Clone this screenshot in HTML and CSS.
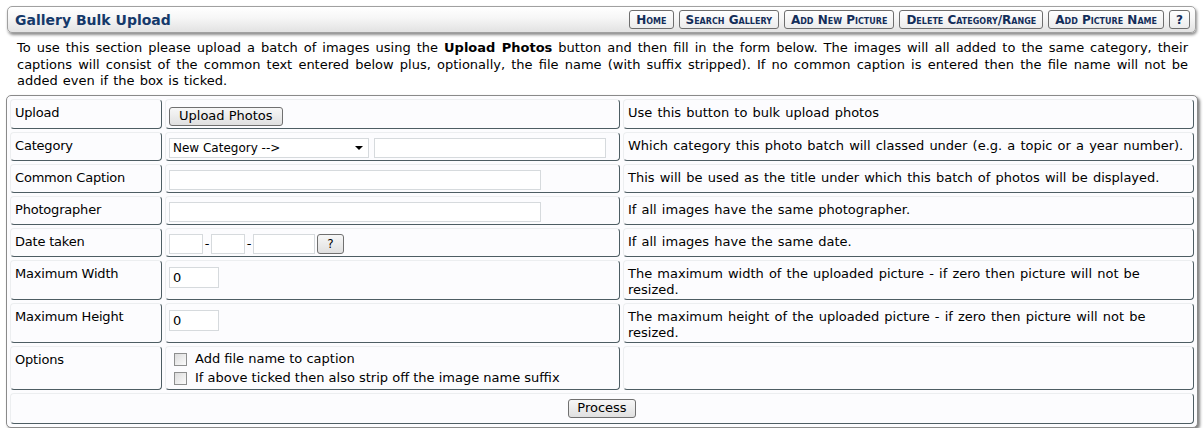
FILE: index.html
```html
<!DOCTYPE html>
<html>
<head>
<meta charset="utf-8">
<title>Gallery Bulk Upload</title>
<link rel="stylesheet" href="styles.css">
</head>
<body>
<div class="header">
  <h1 class="title">Gallery Bulk Upload</h1>
  <nav class="nav">
    <button class="navbtn">Home</button>
    <button class="navbtn">Search Gallery</button>
    <button class="navbtn">Add New Picture</button>
    <button class="navbtn">Delete Category/Range</button>
    <button class="navbtn">Add Picture Name</button>
    <button class="navbtn">?</button>
  </nav>
</div>
<p class="intro">To use this section please upload a batch of images using the <b>Upload Photos</b> button and then fill in the form below. The images will all added to the same category, their captions will consist of the common text entered below plus, optionally, the file name (with suffix stripped). If no common caption is entered then the file name will not be added even if the box is ticked.</p>
<div class="panel">
  <table class="form">
    <colgroup><col class="c1"><col class="c2"><col class="c3"></colgroup>
    <tr>
      <td class="lbl">Upload</td>
      <td class="inp"><button class="btn upbtn">Upload Photos</button></td>
      <td class="desc">Use this button to bulk upload photos</td>
    </tr>
    <tr>
      <td class="lbl">Category</td>
      <td class="inp"><span class="selwrap"><select class="sel"><option>New Category --&gt;</option></select></span><input class="txt catnew" type="text"></td>
      <td class="desc">Which category this photo batch will classed under (e.g. a topic or a year number).</td>
    </tr>
    <tr>
      <td class="lbl">Common Caption</td>
      <td class="inp"><input class="txt wide" type="text"></td>
      <td class="desc">This will be used as the title under which this batch of photos will be displayed.</td>
    </tr>
    <tr>
      <td class="lbl">Photographer</td>
      <td class="inp"><input class="txt wide" type="text"></td>
      <td class="desc">If all images have the same photographer.</td>
    </tr>
    <tr>
      <td class="lbl">Date taken</td>
      <td class="inp"><span class="daterow"><input class="txt dd" type="text"><span class="dash">-</span><input class="txt dd" type="text"><span class="dash">-</span><input class="txt yy" type="text"><button class="btn qbtn">?</button></span></td>
      <td class="desc">If all images have the same date.</td>
    </tr>
    <tr>
      <td class="lbl">Maximum Width</td>
      <td class="inp"><input class="txt num" type="text" value="0"></td>
      <td class="desc">The maximum width of the uploaded picture - if zero then picture will not be resized.</td>
    </tr>
    <tr>
      <td class="lbl">Maximum Height</td>
      <td class="inp"><input class="txt num" type="text" value="0"></td>
      <td class="desc">The maximum height of the uploaded picture - if zero then picture will not be resized.</td>
    </tr>
    <tr>
      <td class="lbl">Options</td>
      <td class="inp opts">
        <label class="opt"><input class="chk" type="checkbox"><span>Add file name to caption</span></label>
        <label class="opt"><input class="chk" type="checkbox"><span>If above ticked then also strip off the image name suffix</span></label>
      </td>
      <td class="desc"></td>
    </tr>
    <tr>
      <td class="submit" colspan="3"><button class="btn procbtn">Process</button></td>
    </tr>
  </table>
</div>
</body>
</html>
```

FILE: styles.css
```css
html, body {
  margin: 0;
  padding: 0;
  background: #ffffff;
}
body {
  font-family: "DejaVu Sans", Verdana, sans-serif;
  font-size: 13px;
  color: #000;
}
.header {
  margin: 6px 7px 0 7px;
  height: 27px;
  box-sizing: border-box;
  border: 1px solid #a0a0a0;
  border-radius: 5px;
  background: linear-gradient(#ffffff, #f6f6f6 45%, #e2e2e2);
  box-shadow: 1px 2px 3px rgba(0,0,0,0.45);
  display: flex;
  align-items: center;
  justify-content: space-between;
  padding: 0 5px 0 7px;
}
.title {
  margin: 0;
  font-size: 14px;
  font-weight: bold;
  color: #15396a;
}
.nav {
  display: flex;
  gap: 5px;
}
.navbtn {
  font-family: "DejaVu Sans", Verdana, sans-serif;
  font-size: 12px;
  font-weight: bold;
  font-variant: small-caps;
  color: #142e5a;
  background: linear-gradient(#ffffff, #ececec);
  border: 1px solid #6e6e6e;
  border-radius: 3px;
  padding: 0 6px;
  height: 19px;
  line-height: 16px;
  cursor: pointer;
}
.intro {
  margin: 7px 15px 0 17px;
  text-align: justify;
  line-height: 16.5px;
  word-spacing: 1px;
}
.panel {
  margin: 5px 5px 0 6px;
  border: 1px solid #8a8a8a;
  border-radius: 5px;
  background: #fcfcfe;
  box-shadow: 2px 2px 3px rgba(0,0,0,0.5);
}
.form {
  width: 100%;
  border-collapse: separate;
  border-spacing: 3px;
  table-layout: fixed;
}
.c1 { width: 152px; }
.c2 { width: 455px; }
.form td {
  border-top: 1px solid #eceef0;
  border-left: 1px solid #eceef0;
  border-right: 1px solid #4d5d63;
  border-bottom: 1px solid #4d5d63;
  border-radius: 4px;
  vertical-align: top;
  line-height: 16px;
}
.lbl {
  padding: 5px 4px 1px 4px;
  letter-spacing: -0.2px;
}
.desc {
  padding: 5px 4px 1px 4px;
  word-spacing: 1px;
}
.inp {
  padding: 5px 3px 2px 3px;
}
.txt {
  box-sizing: border-box;
  height: 20px;
  border: 1px solid #d6dadd;
  background: #fff;
  font-family: "DejaVu Sans", Verdana, sans-serif;
  font-size: 13px;
  padding: 1px 3px;
  margin: 0;
  vertical-align: top;
}
.wide { width: 372px; }
.catnew { width: 232px; margin-left: 5px; }
.num { width: 50px; margin-top: 1px; height: 21px; }
.dd { width: 34px; }
.yy { width: 62px; }
.dash {
  display: inline-block;
  width: 8px;
  text-align: center;
  vertical-align: top;
  line-height: 20px;
}
.daterow { white-space: nowrap; }
.selwrap {
  position: relative;
  display: inline-block;
  vertical-align: top;
}
.selwrap::after {
  content: "";
  position: absolute;
  right: 6px;
  top: 8px;
  border-left: 4px solid transparent;
  border-right: 4px solid transparent;
  border-top: 4px solid #000;
  pointer-events: none;
}
.sel {
  -webkit-appearance: none;
  appearance: none;
  box-sizing: border-box;
  width: 200px;
  height: 20px;
  border: 1px solid #d6dadd;
  background: #fff;
  font-family: "DejaVu Sans", Verdana, sans-serif;
  font-size: 12px;
  padding: 0 3px;
  margin: 0;
  color: #000;
}
.btn {
  font-family: "DejaVu Sans", Verdana, sans-serif;
  font-size: 13px;
  color: #000;
  background: linear-gradient(#f7f7f7, #e0e0e0);
  border: 1px solid #707070;
  border-radius: 3px;
  height: 20px;
  line-height: 16px;
  padding: 0 9px;
  margin: 0;
  cursor: pointer;
}
.upbtn { margin-top: 2px; height: 19px; }
.qbtn {
  width: 27px;
  padding: 0;
  margin-left: 2px;
  font-size: 12px;
}
.opts { padding-top: 3px; padding-bottom: 1px; }
.opt {
  display: flex;
  align-items: center;
  height: 19px;
  padding-left: 5px;
}
.chk {
  -webkit-appearance: none;
  appearance: none;
  width: 13px;
  height: 13px;
  box-sizing: border-box;
  border: 1px solid #8e8f8f;
  background: linear-gradient(135deg, #dcdcdc, #fbfbfb);
  margin: 0 8px 0 0;
  border-radius: 0;
}
.submit {
  text-align: center;
  padding: 5px 4px 5px 4px;
}
.procbtn {
  padding: 0 8px;
  height: 19px;
}
```
